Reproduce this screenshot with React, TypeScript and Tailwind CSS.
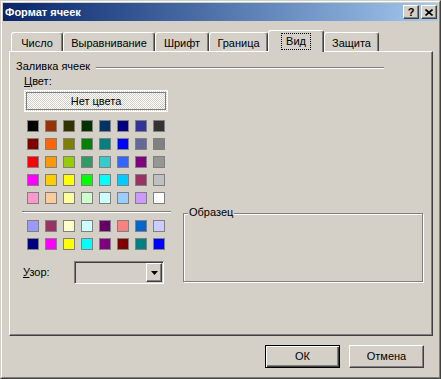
import type { ReactNode } from 'react';

const mainColors = [
  ['#000000', '#993300', '#333300', '#003300', '#003366', '#000080', '#333399', '#333333'],
  ['#800000', '#FF6600', '#808000', '#008000', '#008080', '#0000FF', '#666699', '#808080'],
  ['#FF0000', '#FF9900', '#99CC00', '#339966', '#33CCCC', '#3366FF', '#800080', '#969696'],
  ['#FF00FF', '#FFCC00', '#FFFF00', '#00FF00', '#00FFFF', '#00CCFF', '#993366', '#C0C0C0'],
  ['#FF99CC', '#FFCC99', '#FFFF99', '#CCFFCC', '#CCFFFF', '#99CCFF', '#CC99FF', '#FFFFFF'],
];

const chartColors = [
  ['#9999FF', '#993366', '#FFFFCC', '#CCFFFF', '#660066', '#FF8080', '#0066CC', '#CCCCFF'],
  ['#000080', '#FF00FF', '#FFFF00', '#00FFFF', '#800080', '#800000', '#008080', '#0000FF'],
];

const tabs = [
  { label: 'Число', w: 'w-[52px]' },
  { label: 'Выравнивание', w: 'w-[92px]' },
  { label: 'Шрифт', w: 'w-[54px]' },
  { label: 'Граница', w: 'w-[59px]' },
  { label: 'Вид', w: 'w-[56px]', active: true },
  { label: 'Защита', w: 'w-[55px]' },
];

function Palette({ rows }: { rows: string[][] }) {
  return (
    <div className="grid grid-cols-[repeat(8,12px)] gap-[6px]">
      {rows.flat().map((c, i) => (
        <div key={i} className="w-[12px] h-[12px] border border-[#808080]" style={{ backgroundColor: c }} />
      ))}
    </div>
  );
}

function CaptionButton({ children }: { children: ReactNode }) {
  return (
    <div className="w-[16px] h-[14px] flex items-center justify-center bg-[#D4D0C8] border border-t-white border-l-white border-r-[#404040] border-b-[#404040] shadow-[inset_-1px_-1px_0_#808080]">
      {children}
    </div>
  );
}

function Tab({ label, w, active }: { label: string; w: string; active?: boolean }) {
  if (active) {
    return (
      <div className={`${w} h-[22px] -mb-px bg-[#D4D0C8] rounded-t-[3px] border-t border-l border-r border-t-white border-l-white border-r-[#404040] shadow-[inset_-1px_0_0_#808080] flex justify-center pt-[2px]`}>
        <span className="h-[17px] px-[4px] border border-dotted border-black flex items-center">{label}</span>
      </div>
    );
  }
  return (
    <div className={`${w} h-[19px] bg-[#D4D0C8] rounded-t-[3px] border-t border-l border-r border-t-white border-l-white border-r-[#404040] shadow-[inset_-1px_0_0_#808080] flex items-center justify-center pt-[3px]`}>
      {label}
    </div>
  );
}

export default function App() {
  return (
    <div className="w-[441px] h-[379px] bg-[#D4D0C8] font-['Liberation_Sans',Arial,sans-serif] text-[11px] leading-[13px] text-black select-none">
      <div className="h-full border border-t-[#D4D0C8] border-l-[#D4D0C8] border-r-[#404040] border-b-[#404040]">
        <div className="h-full border border-t-white border-l-white border-r-[#808080] border-b-[#808080] p-px flex flex-col">
          {/* title bar */}
          <div className="h-[18px] shrink-0 flex items-center bg-linear-to-r from-[#0A246A] to-[#A6CAF0] pl-[2px] pr-[1px]">
            <span className="font-bold text-white">Формат ячеек</span>
            <div className="ml-auto flex gap-[2px]">
              <CaptionButton>
                <span className="font-bold text-[11px] leading-none">?</span>
              </CaptionButton>
              <CaptionButton>
                <svg width="8" height="7" viewBox="0 0 8 7">
                  <path d="M0.5 0.5L7.5 6.5M7.5 0.5L0.5 6.5" stroke="black" strokeWidth="1.6" />
                </svg>
              </CaptionButton>
            </div>
          </div>

          {/* tabs */}
          <div className="relative z-10 mt-[9px] ml-[8px] h-[21px] flex items-end">
            {tabs.map((t) => (
              <Tab key={t.label} {...t} />
            ))}
          </div>

          {/* panel */}
          <div className="ml-[6px] w-[424px] h-[285px] border border-t-white border-l-white border-r-[#404040] border-b-[#404040] shadow-[inset_-1px_-1px_0_#808080] pt-[8px]">
            <div className="w-[374px] pl-[6px] flex items-center">
              <span>Заливка ячеек</span>
              <div className="flex-1 ml-[6px] mt-[2px] border-t border-b border-t-[#808080] border-b-white" />
            </div>

            <div className="flex pl-[12px]">
              <div className="w-[149px]">
                <div className="mt-[2px] pl-[2px]">
                  <span className="underline">Ц</span>вет:
                </div>
                <div className="mt-[2px] ml-[2px] w-[144px] h-[22px] border border-white p-[1px] bg-[repeating-conic-gradient(#ffffff_0_25%,#d4d0c8_0_50%)] bg-[length:2px_2px]">
                  <div className="h-full border border-[#808080] flex items-center justify-center">Нет цвета</div>
                </div>
                <div className="mt-[8px] ml-[5px]">
                  <Palette rows={mainColors} />
                </div>
                <div className="mt-[7px] border-t border-b border-t-[#808080] border-b-white" />
                <div className="mt-[7px] ml-[5px]">
                  <Palette rows={chartColors} />
                </div>
                <div className="mt-[11px] flex items-center">
                  <div className="w-[52px] pl-[1px]">
                    <span className="underline">У</span>зор:
                  </div>
                  <div className="w-[90px] h-[23px] border border-t-[#808080] border-l-[#808080] border-r-white border-b-white shadow-[inset_1px_1px_0_#404040] flex justify-end p-px">
                    <div className="w-[16px] h-full border border-t-white border-l-white border-r-[#404040] border-b-[#404040] shadow-[inset_-1px_-1px_0_#808080] flex items-center justify-center">
                      <svg width="7" height="4" viewBox="0 0 7 4">
                        <path d="M0 0H7L3.5 4Z" fill="black" />
                      </svg>
                    </div>
                  </div>
                </div>
              </div>

              <div className="ml-[12px] self-end mb-[2px] w-[240px] h-[69px] relative border border-[#808080] shadow-[1px_1px_0_white,inset_1px_1px_0_white]">
                <span className="absolute -top-[8px] left-[4px] bg-[#D4D0C8] px-px">Образец</span>
              </div>
            </div>
          </div>

          {/* buttons */}
          <div className="mt-[9px] flex justify-end gap-[9px] pr-[14px]">
            <div className="w-[75px] h-[23px] border border-black shadow-[inset_1px_1px_0_white,inset_-1px_-1px_0_#404040,inset_-2px_-2px_0_#808080] flex items-center justify-center">
              ОК
            </div>
            <div className="w-[75px] h-[23px] border border-t-white border-l-white border-r-[#404040] border-b-[#404040] shadow-[inset_-1px_-1px_0_#808080] flex items-center justify-center">
              Отмена
            </div>
          </div>
        </div>
      </div>
    </div>
  );
}
